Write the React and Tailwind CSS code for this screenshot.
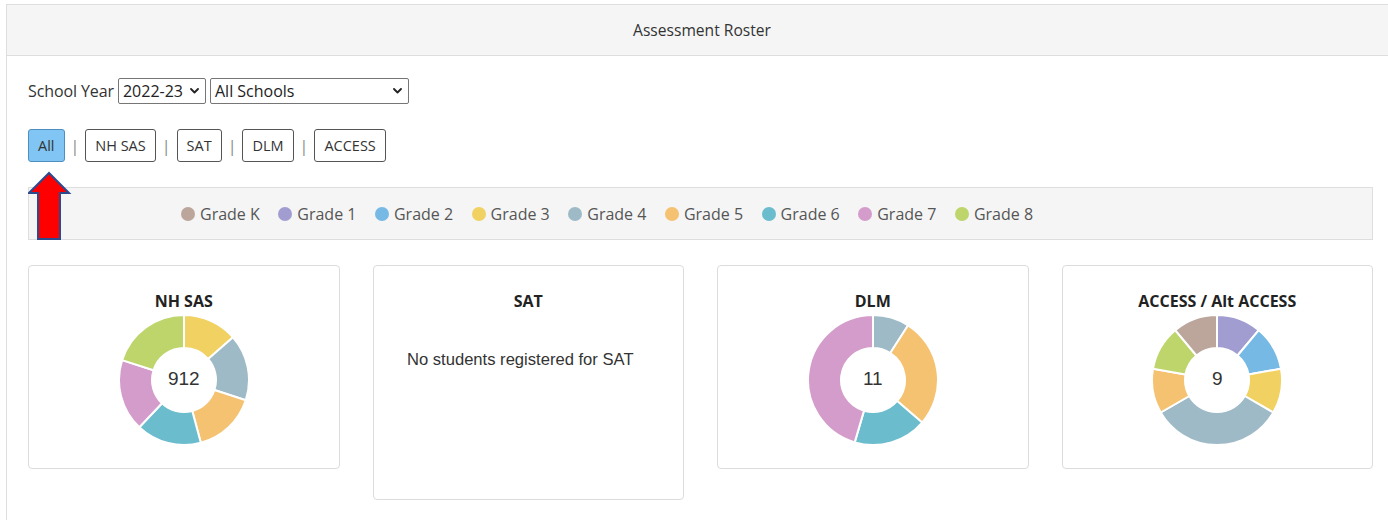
import React from "react";

const COLORS = {
  K: "#bca69c",
  1: "#a19dd1",
  2: "#76b9e5",
  3: "#f0d162",
  4: "#9ebac7",
  5: "#f4c271",
  6: "#6bbccd",
  7: "#d39ccb",
  8: "#bdd56b",
};

const GRADES = ["K", "1", "2", "3", "4", "5", "6", "7", "8"];

const CHARTS = [
  {
    title: "NH SAS",
    total: 912,
    segments: [
      { grade: "3", value: 124 },
      { grade: "4", value: 150 },
      { grade: "5", value: 144 },
      { grade: "6", value: 148 },
      { grade: "7", value: 163 },
      { grade: "8", value: 183 },
    ],
  },
  { title: "SAT", empty: "No students registered for SAT" },
  {
    title: "DLM",
    total: 11,
    segments: [
      { grade: "4", value: 1 },
      { grade: "5", value: 3 },
      { grade: "6", value: 2 },
      { grade: "7", value: 5 },
    ],
  },
  {
    title: "ACCESS / Alt ACCESS",
    total: 9,
    segments: [
      { grade: "1", value: 1 },
      { grade: "2", value: 1 },
      { grade: "3", value: 1 },
      { grade: "4", value: 3 },
      { grade: "5", value: 1 },
      { grade: "8", value: 1 },
      { grade: "K", value: 1 },
    ],
  },
];

function Donut({ segments, total }) {
  const c = 65;
  const R = 65;
  const r = 32;
  const sum = segments.reduce((a, s) => a + s.value, 0);
  const pt = (rad, a) => [c + rad * Math.sin(a), c - rad * Math.cos(a)];
  let acc = 0;
  const paths = segments.map((s, i) => {
    const a0 = (acc / sum) * 2 * Math.PI;
    acc += s.value;
    const a1 = (acc / sum) * 2 * Math.PI;
    const large = a1 - a0 > Math.PI ? 1 : 0;
    const [x0, y0] = pt(R, a0);
    const [x1, y1] = pt(R, a1);
    const [x2, y2] = pt(r, a1);
    const [x3, y3] = pt(r, a0);
    const d = `M${x0} ${y0} A${R} ${R} 0 ${large} 1 ${x1} ${y1} L${x2} ${y2} A${r} ${r} 0 ${large} 0 ${x3} ${y3} Z`;
    return (
      <path key={i} d={d} fill={COLORS[s.grade]} stroke="#ffffff" strokeWidth="2" strokeLinejoin="round" />
    );
  });
  return (
    <div className="relative h-[130px] w-[130px]">
      <svg width="130" height="130" viewBox="0 0 130 130">
        {paths}
      </svg>
      <div className="absolute inset-0 flex items-center justify-center pb-[2px] text-[19px] text-[#333] [font-family:'Liberation_Sans',Arial,sans-serif]">
        {total}
      </div>
    </div>
  );
}

function Chevron() {
  return (
    <svg width="9" height="6" viewBox="0 0 9 6" className="shrink-0">
      <path d="M1 1 L4.5 4.5 L8 1" fill="none" stroke="#222" strokeWidth="1.8" strokeLinecap="round" strokeLinejoin="round" />
    </svg>
  );
}

function FakeSelect({ value, width }) {
  return (
    <div
      className={`flex h-[26px] items-center justify-between rounded-[2px] border border-[#767676] bg-white pl-[4px] pr-[6px] text-[16px] text-[#222] ${width}`}
    >
      <span className="leading-none">{value}</span>
      <Chevron />
    </div>
  );
}

function Sep() {
  return <span className="mx-[6px] text-[16px] text-[#888]">|</span>;
}

function TabButton({ label, active }) {
  return (
    <div
      className={`flex h-[33px] items-center rounded-[3px] border px-[9px] text-[14.5px] text-[#333] ${
        active ? "border-[#4f8fbf] bg-[#80c5f3]" : "border-[#555] bg-white"
      }`}
    >
      {label}
    </div>
  );
}

function Card({ chart }) {
  return (
    <div className="flex flex-col items-center rounded-[4px] border border-[#dcdcdc] bg-white pt-[24px] pb-[23px]">
      <div className="h-[22px] text-[16px] font-bold leading-[22px] text-[#222]">{chart.title}</div>
      {chart.empty ? (
        <div className="mt-[38px] mb-[106px] pr-[16px] text-[16.6px] leading-[20px] text-[#333] [font-family:'Liberation_Sans',Arial,sans-serif]">
          {chart.empty}
        </div>
      ) : (
        <div className="mt-[3px]">
          <Donut segments={chart.segments} total={chart.total} />
        </div>
      )}
    </div>
  );
}

export default function App() {
  return (
    <div className="min-h-[520px] w-full overflow-hidden bg-white pl-[6px] pt-[4px] [font-family:'Open_Sans',sans-serif]">
      <div className="w-[1392px] border border-[#dedede]">
        <div className="flex h-[51px] items-center justify-center border-b border-[#dedede] bg-[#f5f5f5] pt-[1px] text-[15.6px] text-[#333]">
          Assessment Roster
        </div>

        <div className="pl-[21px] pr-[24px] pt-[22px] pb-[40px]">
          <div className="flex items-center text-[16px] text-[#333]">
            <span className="mr-[4px] tracking-[-0.1px]">School Year</span>
            <FakeSelect value="2022-23" width="w-[88px]" />
            <div className="w-[4px]" />
            <FakeSelect value="All Schools" width="w-[199px]" />
          </div>

          <div className="mt-[25px] flex items-center">
            <TabButton label="All" active />
            <Sep />
            <TabButton label="NH SAS" />
            <Sep />
            <TabButton label="SAT" />
            <Sep />
            <TabButton label="DLM" />
            <Sep />
            <TabButton label="ACCESS" />
          </div>

          <div className="relative mt-[25px]">
            <div className="flex h-[53px] items-center gap-[18.5px] border border-[#dedede] bg-[#f5f5f5] pl-[152px] text-[16px] text-[#555]">
              {GRADES.map((g) => (
                <div key={g} className="flex items-center gap-[5px]">
                  <span className="h-[14px] w-[14px] rounded-full" style={{ backgroundColor: COLORS[g] }} />
                  <span>Grade {g}</span>
                </div>
              ))}
            </div>
            {/* callout arrow pointing at the active tab */}
            <svg className="absolute left-0 top-[-16px]" width="44" height="70" viewBox="0 0 44 70">
              <polygon
                points="21,2 1,22 10,22 10,68 32,68 32,22 41,22"
                fill="#ff0000"
                stroke="#2c4a8e"
                strokeWidth="2"
                strokeLinejoin="miter"
              />
            </svg>
          </div>

          <div className="mt-[25px] grid grid-cols-4 items-start gap-[33px]">
            {CHARTS.map((c) => (
              <Card key={c.title} chart={c} />
            ))}
          </div>
        </div>
      </div>
    </div>
  );
}
